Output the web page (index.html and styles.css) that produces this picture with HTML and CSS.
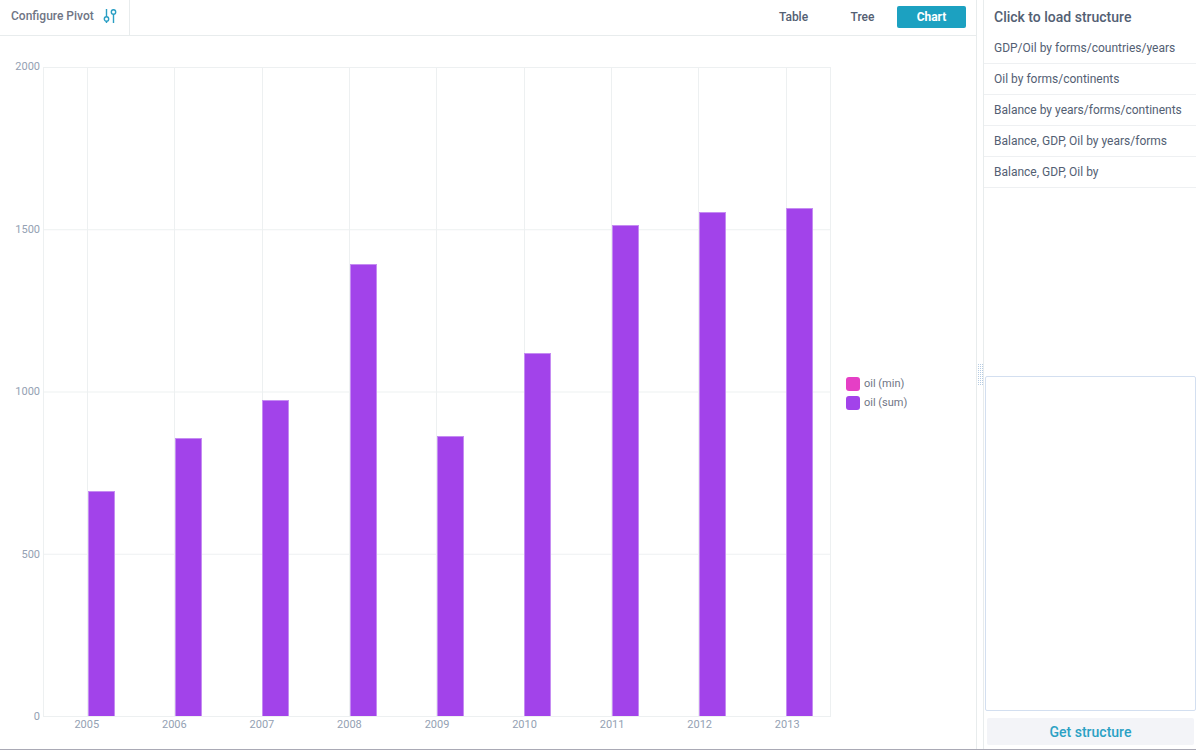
FILE: index.html
```html
<!DOCTYPE html>
<html lang="en">
<head>
<meta charset="utf-8">
<title>Pivot chart</title>
<link rel="stylesheet" href="styles.css">
</head>
<body>
<div class="app">
  <main class="pivot">
    <header class="toolbar">
      <button class="configure" type="button">Configure Pivot
        <svg class="configure-icon" width="14" height="16" viewBox="0 0 14 16" fill="none" stroke="currentColor" stroke-width="1.4">
          <path d="M3.5 1v8M3.5 13v2M10.5 1v1M10.5 6v9"/>
          <circle cx="3.5" cy="11" r="2.2"/>
          <circle cx="10.5" cy="4" r="2.2"/>
        </svg>
      </button>
      <nav class="modes">
        <button class="mode" type="button">Table</button>
        <button class="mode" type="button">Tree</button>
        <button class="mode mode-active" type="button">Chart</button>
      </nav>
    </header>
    <section class="chart">
      <div class="y-axis"><span>2000</span><span>1500</span><span>1000</span><span>500</span><span>0</span></div>
      <div class="plot">
        <div class="slot"><div class="bar" style="height:34.6%"></div></div>
        <div class="slot"><div class="bar" style="height:42.9%"></div></div>
        <div class="slot"><div class="bar" style="height:48.7%"></div></div>
        <div class="slot"><div class="bar" style="height:69.7%"></div></div>
        <div class="slot"><div class="bar" style="height:43.2%"></div></div>
        <div class="slot"><div class="bar" style="height:55.9%"></div></div>
        <div class="slot"><div class="bar" style="height:75.7%"></div></div>
        <div class="slot"><div class="bar" style="height:77.6%"></div></div>
        <div class="slot"><div class="bar" style="height:78.2%"></div></div>
      </div>
      <ul class="legend">
        <li><i class="swatch swatch-min"></i>oil (min)</li>
        <li><i class="swatch swatch-sum"></i>oil (sum)</li>
      </ul>
      <div class="x-axis"><span>2005</span><span>2006</span><span>2007</span><span>2008</span><span>2009</span><span>2010</span><span>2011</span><span>2012</span><span>2013</span></div>
    </section>
  </main>
  <div class="resizer"><i class="grip"></i></div>
  <aside class="side">
    <h2 class="side-title">Click to load structure</h2>
    <ul class="structures">
      <li><button type="button">GDP/Oil by forms/countries/years</button></li>
      <li><button type="button">Oil by forms/continents</button></li>
      <li><button type="button">Balance by years/forms/continents</button></li>
      <li><button type="button">Balance, GDP, Oil by years/forms</button></li>
      <li><button type="button">Balance, GDP, Oil by</button></li>
    </ul>
    <textarea class="output" aria-label="Structure"></textarea>
    <button class="get" type="button">Get structure</button>
  </aside>
</div>
</body>
</html>
```
FILE: styles.css
```css
* { box-sizing: border-box; }
body {
  margin: 0;
  font-family: Roboto, "Liberation Sans", sans-serif;
  font-size: 12px;
  color: #536073;
  background: #fff;
}
button {
  border: 0;
  padding: 0;
  background: none;
  font: inherit;
  color: inherit;
}
ul { list-style: none; margin: 0; padding: 0; }
.app {
  display: grid;
  grid-template-columns: 1fr 8px 212px;
  height: 100vh;
  border-bottom: 1px solid #a9a9b5;
}
.pivot { display: flex; flex-direction: column; min-width: 0; }
.toolbar {
  display: flex;
  justify-content: space-between;
  height: 36px;
  border-bottom: 1px solid #e8eced;
}
.configure {
  display: flex;
  align-items: center;
  gap: 9px;
  padding: 0 12px 3px 11px;
  border-right: 1px solid #e8eced;
  font-weight: 500;
  color: #6f7585;
}
.configure-icon { color: #2b9fc4; }
.modes { display: flex; align-items: center; padding: 0 10px 2px 0; }
.mode { width: 69px; height: 22px; border-radius: 2px; font-weight: 500; }
.mode-active { background: #1ca1c1; color: #fff; font-weight: 700; }
.chart {
  flex: 1;
  display: grid;
  grid-template-columns: 43px 1fr 145px;
  grid-template-rows: 1fr 32px;
  padding-top: 31px;
  font-size: 11px;
  line-height: 14px;
  color: #94a1b3;
}
.y-axis {
  display: flex;
  flex-direction: column;
  justify-content: space-between;
  margin: -7px 0;
  padding-right: 3px;
  text-align: right;
}
.plot {
  display: grid;
  grid-template-columns: repeat(9, 1fr);
  border: 1px solid #edf0f1;
  border-top: 0;
  background: linear-gradient(#edf0f1, #edf0f1 1px, transparent 1px) 0 0 / 100% 25%;
}
.slot {
  display: flex;
  align-items: flex-end;
  padding-left: 50%;
  background: linear-gradient(#edf0f1, #edf0f1) 50% 0 / 1px 100% no-repeat;
}
.bar {
  width: 62%;
  background: #a243ea;
  border: 1px solid #c58cf2;
  border-bottom: 0;
}
.legend {
  display: flex;
  flex-direction: column;
  justify-content: center;
  gap: 5px;
  padding: 2px 0 0 15px;
  color: #6f7585;
}
.legend li { display: flex; align-items: center; gap: 4px; }
.swatch { width: 14px; height: 14px; border-radius: 3px; }
.swatch-min { background: #e53fc5; }
.swatch-sum { background: #a243ea; }
.x-axis {
  grid-column: 2;
  display: grid;
  grid-template-columns: repeat(9, 1fr);
  padding-top: 1px;
  text-align: center;
}
.resizer {
  display: flex;
  align-items: center;
  justify-content: center;
  border: solid #e8eced;
  border-width: 0 1px;
}
.grip {
  width: 5px;
  height: 21px;
  background: linear-gradient(90deg, #b5cbe2 1px, transparent 1px) 0 0 / 2px 2px;
  mask: linear-gradient(#000 1px, transparent 1px) 0 0 / 2px 2px;
}
.side { display: flex; flex-direction: column; min-width: 0; }
.side-title {
  margin: 0;
  padding: 7px 10px 6px;
  font-size: 14px;
  line-height: 20px;
  font-weight: 500;
}
.structures li { border-bottom: 1px solid #eef0f2; }
.structures button {
  width: 100%;
  height: 30px;
  padding: 0 0 0 10px;
  text-align: left;
  white-space: nowrap;
}
.output {
  height: 335px;
  margin: auto 0 7px 1px;
  border: 1px solid #d3dff0;
  border-radius: 2px;
  background: #fff;
  resize: none;
}
.get {
  height: 27px;
  margin: 0 2px 4px 3px;
  border-radius: 2px;
  background: #f3f4f8;
  color: #2ba1c4;
  font-size: 14px;
  font-weight: 500;
}
```
